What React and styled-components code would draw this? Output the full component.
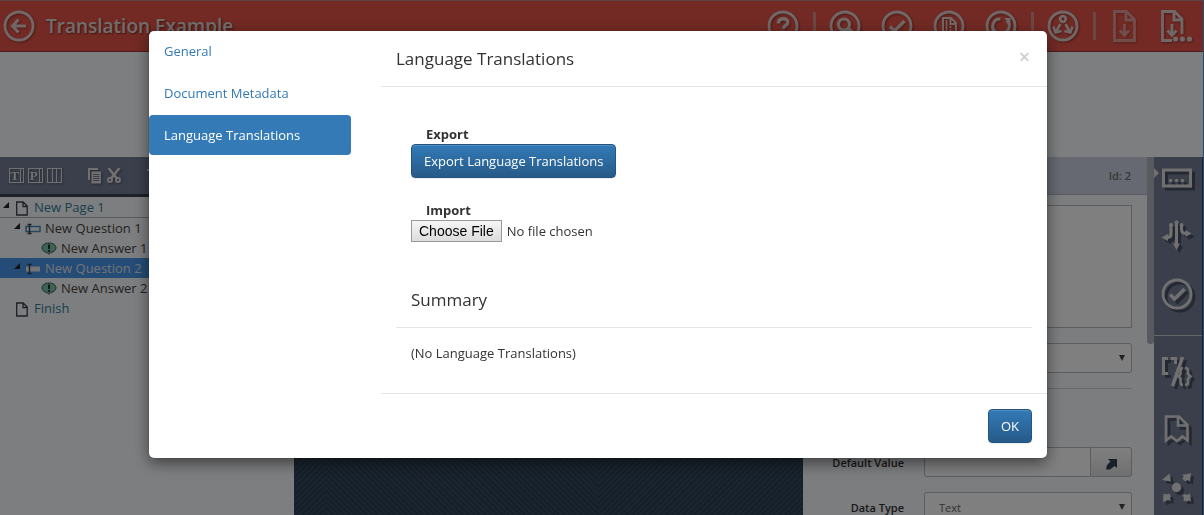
import React, { useState } from 'react';
import styled, { createGlobalStyle, css } from 'styled-components';

const fontFamily = '"Open Sans", "Noto Sans", sans-serif';

const colors = {
  red: '#e65448',
  slate: '#747f97',
  slateDark: '#3c4254',
  panel: '#f8fafe',
  paper: '#fbfdff',
  icon: '#e0e0e0',
  blue: '#337ab7',
  teal: '#327f9c',
  text: '#333333',
  line: '#e5e5e5'
};

const GlobalStyle = createGlobalStyle`
  *, *::before, *::after { box-sizing: border-box; }
  body {
    margin: 0;
    overflow: hidden;
    font-family: ${fontFamily};
    font-size: 13px;
    line-height: 20px;
    color: ${colors.text};
  }
  button, input, select, textarea { font-family: inherit; font-size: inherit; }
  h1, h2, h3, p, ul { margin: 0; padding: 0; }
  svg { display: block; }
`;

const Page = styled.div`
  display: flex;
  flex-direction: column;
  height: 100vh;
  background: ${colors.paper};
  border-right: 1px solid #3f9ff0;
`;

const IconButton = styled.button`
  display: flex;
  align-items: center;
  justify-content: center;
  flex: none;
  padding: 0;
  border: none;
  background: none;
  color: ${colors.icon};
  opacity: ${props => (props.$faded ? 0.6 : 1)};
  svg { filter: drop-shadow(1px 1px 1px rgba(0, 0, 0, 0.35)); }
`;

const Header = styled.header`
  display: flex;
  align-items: center;
  flex: none;
  height: 52px;
  padding: 0 10px 0 3px;
  background: ${colors.red};
  border-top: 1px solid #b0898a;
  border-bottom: 1px solid #a03a34;
  h1 {
    flex: 1;
    margin-left: 11px;
    font-size: 19px;
    font-weight: 600;
    color: #e4dad8;
    text-shadow: 1px 1px 2px rgba(0, 0, 0, 0.5);
  }
  ${IconButton} { color: #e2cfcc; }
`;

const IconGroup = styled.div`
  display: flex;
  gap: 20px;
  & + & {
    margin-left: 14px;
    padding-left: 16px;
    background: linear-gradient(#d9908a, #d9908a) left center / 3px 28px no-repeat;
  }
`;

const TopSpace = styled.div`
  flex: none;
  height: 105px;
`;

const Workspace = styled.div`
  display: flex;
  flex: 1;
  min-height: 0;
`;

const TreePanel = styled.aside`
  flex: none;
  width: 294px;
`;

const TreeToolbar = styled.div`
  display: flex;
  align-items: center;
  height: 40px;
  padding-left: 9px;
  gap: 4px;
  background: ${colors.slate};
  border-bottom: 3px solid ${colors.slateDark};
  button:nth-child(4) { margin-left: 22px; }
  button:nth-child(6) { margin-left: 22px; }
`;

const TreeRow = styled.li`
  display: flex;
  align-items: center;
  height: 20px;
  padding-left: ${props => props.$indent}px;
  list-style: none;
  white-space: nowrap;
  color: ${props => (props.$page ? colors.teal : '#444')};
  ${props => props.$ruled && css`
    height: 21px;
    border-bottom: 1px solid #b4b6ba;
  `}
  ${props => props.$selected && css`
    color: #e4e8ee;
    background: #4898ec;
  `}
`;

const Slot = styled.span`
  display: flex;
  justify-content: ${props => (props.$width > 11 ? 'center' : 'flex-start')};
  width: ${props => props.$width}px;
  margin-right: ${props => (props.$width > 11 ? 4 : 0)}px;
`;

const stripes = angle =>
  `repeating-linear-gradient(${angle}deg, transparent 0 2px, rgba(255, 255, 255, 0.05) 2px 4px)`;

const Canvas = styled.main`
  flex: 1;
  display: grid;
  grid-template-columns: 32px 272px 1fr;
  background: #2c4054;
  span { background: ${stripes(-45)}; }
  span:nth-child(2) { background: ${stripes(45)}; }
`;

const Properties = styled.section`
  flex: none;
  width: 344px;
  background: ${colors.panel};
`;

const PropertiesHead = styled.div`
  height: 38px;
  padding: 9px 16px 0 0;
  text-align: right;
  font-size: 11px;
  font-weight: 600;
  color: #6c6e72;
  background: #ccd2e2;
  border-bottom: 1px solid #b4b9c6;
`;

const Fields = styled.form`
  display: flex;
  flex-direction: column;
  gap: 15px;
  padding: 10px 15px 0 0;
  hr {
    width: 100%;
    height: 1px;
    margin: 0 0 43px;
    border: none;
    background: #cdcfd3;
  }
`;

const Field = styled.div`
  display: grid;
  grid-template-columns: 101px 1fr;
  gap: 20px;
  label {
    padding-top: 6px;
    text-align: right;
    font-size: 11px;
    font-weight: 600;
    color: #333;
  }
  textarea, select, input {
    width: 100%;
    min-width: 0;
    height: 30px;
    padding: 0 14px;
    border: 1px solid #b8babf;
    border-radius: 3px;
    background: #fff;
    color: #666;
    font-size: 11px;
  }
  textarea {
    height: 123px;
    border-radius: 0;
    resize: none;
  }
`;

const SelectBox = styled.div`
  display: grid;
  select {
    grid-area: 1 / 1;
    appearance: none;
  }
  &::after {
    content: '';
    grid-area: 1 / 1;
    place-self: center end;
    margin-right: 7px;
    border: 3px solid transparent;
    border-top: 6px solid #444;
    border-bottom: none;
    pointer-events: none;
  }
`;

const InputGroup = styled.div`
  display: flex;
  input { border-radius: 3px 0 0 3px; }
  button {
    flex: none;
    display: flex;
    align-items: center;
    justify-content: center;
    width: 41px;
    padding: 4px 0 0;
    border: 1px solid #b8babf;
    border-left: none;
    border-radius: 0 3px 3px 0;
    background: linear-gradient(#fff, #e0e0e0);
    color: #2c4256;
  }
`;

const ScrollTrack = styled.div`
  flex: none;
  width: 7px;
  background: ${colors.panel};
  &::before {
    content: '';
    display: block;
    height: 187px;
    border-radius: 0 0 3px 3px;
    background: #b2b5be;
  }
`;

const Rail = styled.nav`
  flex: none;
  width: 49px;
  background: ${colors.slate};
  border-right: 1px solid #3c4254;
`;

const RailGroup = styled.div`
  display: flex;
  flex-direction: column;
  align-items: center;
  gap: 26px;
  padding: 5px 3px 25px 0;
  & + & {
    padding-top: 19px;
    border-top: 1px solid #c8ccd4;
  }
  svg { filter: drop-shadow(3px 3px 0 rgba(30, 36, 54, 0.5)); }
`;

const RailButton = styled(IconButton)`
  position: relative;
  width: 32px;
  ${props => props.$active && css`
    &::before {
      content: '';
      position: absolute;
      left: -7px;
      top: 6px;
      border: 5px solid transparent;
      border-left-color: ${colors.icon};
      border-right: none;
    }
  `}
`;

const Backdrop = styled.div`
  position: fixed;
  inset: 0;
  display: flex;
  justify-content: center;
  align-items: flex-start;
  padding: 31px 8px 0 0;
  background: rgba(0, 0, 0, 0.5);
`;

const Dialog = styled.div`
  display: grid;
  grid-template-columns: 202px 1fr;
  column-gap: 30px;
  width: 100%;
  max-width: 898px;
  background: #fff;
  border-radius: 5px;
  box-shadow: 0 5px 15px rgba(0, 0, 0, 0.5), 0 0 1px rgba(0, 0, 0, 0.6);
`;

const SideNav = styled.nav`
  display: flex;
  flex-direction: column;
  gap: 2px;
`;

const SideLink = styled.a`
  padding: 10px 15px;
  border-radius: 4px;
  text-decoration: none;
  color: ${props => (props.$active ? '#fff' : colors.blue)};
  background: ${props => (props.$active ? colors.blue : 'transparent')};
`;

const DialogHead = styled.div`
  display: flex;
  align-items: center;
  justify-content: space-between;
  height: 56px;
  padding: 0 15px;
  border-bottom: 1px solid ${colors.line};
  h2 {
    font-size: 17px;
    font-weight: 500;
  }
  button {
    width: 15px;
    padding: 0 0 4px;
    border: none;
    background: none;
    font-size: 20px;
    font-weight: 600;
    line-height: 20px;
    color: #ccc;
  }
`;

const DialogBody = styled.div`
  padding: 37px 15px 30px;
  h3 {
    margin-top: 46px;
    padding: 0 15px 15px;
    border-bottom: 1px solid ${colors.line};
    font-size: 17px;
    font-weight: 400;
    line-height: 24px;
  }
  p { padding: 15px 15px 0; }
`;

const FormGroup = styled.div`
  display: flex;
  flex-direction: column;
  align-items: flex-start;
  padding-left: 15px;
  & + & { margin-top: 22px; }
  label {
    padding-left: 15px;
    font-weight: 700;
  }
`;

const PrimaryButton = styled.button`
  height: 34px;
  padding: 0 12px;
  border: 1px solid #245580;
  border-radius: 4px;
  background: linear-gradient(#337ab7, #265a88);
  box-shadow: inset 0 1px 0 rgba(255, 255, 255, 0.15), 0 1px 1px rgba(0, 0, 0, 0.08);
  color: #fff;
`;

const FileInput = styled.input`
  height: 22px;
  color: ${colors.text};
  &::file-selector-button {
    height: 22px;
    margin-right: 5px;
    padding: 0 7px;
    border: 1px solid #999;
    border-radius: 0;
    background: linear-gradient(#f6f6f6, #dcdcdc);
    font-family: "Liberation Sans", sans-serif;
    font-size: 14px;
    color: #000;
  }
`;

const DialogFoot = styled.div`
  display: flex;
  justify-content: flex-end;
  padding: 15px;
  border-top: 1px solid ${colors.line};
`;

const Circled = ({ children }) => (
  <svg width="32" height="32" viewBox="0 0 32 32" fill="none" stroke="currentColor" strokeWidth="3">
    <circle cx="16" cy="16" r="14" strokeWidth="2.8" />
    {children}
  </svg>
);

const BackIcon = () => (
  <Circled><path d="M23 16H10.500M15.500 9.500L9.500 16l6 6.500" /></Circled>
);

const HelpIcon = () => (
  <Circled>
    <path d="M11.500 13.500c0-3.500 2-4.700 4.700-4.700 2.600 0 4.600 1.300 4.600 3.600 0 3-4.300 3-4.300 6.400" strokeWidth="3.500" />
    <path d="M16.500 20.500v3.500" strokeWidth="3.500" />
  </Circled>
);

const SearchIcon = () => (
  <Circled><circle cx="15" cy="14.500" r="5.500" strokeWidth="3.200" /><path d="M19 18.500l5 5" strokeWidth="4" /></Circled>
);

const CheckIcon = () => (
  <Circled><path d="M9 16.500l4.500 4.500L23.500 11" strokeWidth="3.500" /></Circled>
);

const DocIcon = () => (
  <Circled>
    <path d="M10 24V8h8l5 5v11M17.500 8v6h5.500" strokeWidth="2" />
    <path d="M13.500 10v14" strokeWidth="1.500" />
    <path d="M17.500 16v9" strokeWidth="1.800" strokeDasharray="2 1.500" />
  </Circled>
);

const RefreshIcon = () => (
  <Circled>
    <path d="M10.500 21.500a7 7 0 0 1 5-12.500M21.500 10.500a7 7 0 0 1-5 12.500" strokeWidth="3" />
    <path d="M19 8h6.500v6.500zM13 24H6.500v-6.500z" fill="currentColor" stroke="none" />
  </Circled>
);

const BranchIcon = () => (
  <Circled>
    <circle cx="16" cy="9" r="2.800" strokeWidth="2.800" />
    <path d="M13.500 14L9.500 21M18.500 14l4 7" strokeWidth="2.600" />
    <path d="M6.500 16.500l2 6 6-1.500M25.500 16.500l-2 6-6-1.500" strokeWidth="2.400" />
  </Circled>
);

const DownloadIcon = ({ dots }) => (
  <svg width="32" height="32" viewBox="0 0 32 32" fill="none" stroke="currentColor" strokeWidth="2.800">
    {dots
      ? <path d="M11 30.500H1.500v-29h12l7.500 7.500V24M13 1.500V10h8" />
      : <path d="M5.500 1.500h12l8 8v21h-20zM17 1.500V10h8.500" />}
    <path d={dots ? 'M11 14v11M6.500 20.500L11 25.500l4.500-5' : 'M15.500 14v11M11 20.500l4.500 5 4.500-5'} />
    {dots && [14.5, 21.5, 28.5].map(x => (
      <circle key={x} cx={x} cy="29" r="2.600" fill="currentColor" stroke="none" />
    ))}
  </svg>
);

const LayoutIcon = ({ letter }) => (
  <svg width="15" height="15" viewBox="0 0 15 15" fill="none" stroke="currentColor" strokeWidth="1">
    <rect x="0.500" y="0.500" width="14" height="14" />
    <path d={letter ? 'M11.500 0v15' : 'M5.500 0v15M9.500 0v15'} />
    {letter && (
      <text x="5.800" y="12" textAnchor="middle" fontFamily="Liberation Serif, serif" fontWeight="700" fontSize="13" fill="currentColor" stroke="none">
        {letter}
      </text>
    )}
  </svg>
);

const CopyIcon = () => (
  <svg width="15" height="16" viewBox="0 0 15 16" fill="none" stroke="currentColor">
    <path d="M1 12V1h9" strokeWidth="2" />
    <rect x="3.500" y="3.500" width="9.500" height="12" fill="currentColor" stroke="none" />
    <path d="M5 6.500h6.500M5 8.500h6.500M5 10.500h6.500M5 12.500h6.500" stroke={colors.slate} />
  </svg>
);

const CutIcon = () => (
  <svg width="14" height="15" viewBox="0 0 14 15" fill="none" stroke="currentColor" strokeWidth="2">
    <path d="M1.500 0l8 10M12.500 0l-8 10" strokeWidth="2.600" />
    <circle cx="3" cy="12" r="2" />
    <circle cx="11" cy="12" r="2" />
  </svg>
);

const TrashIcon = () => (
  <svg width="14" height="15" viewBox="0 0 14 15" fill="currentColor">
    <path d="M0 1h14v2H0zM2 4h10l-1 11H3z" />
  </svg>
);

const ArrowIcon = () => (
  <svg width="6" height="12" viewBox="0 0 6 12"><path d="M6 1v6H0z" fill="#222" /></svg>
);

const PageIcon = () => (
  <svg width="12" height="17" viewBox="0 0 12 17" fill="none" stroke="#3a4050">
    <path d="M.7 3h6.500l4 4v9H.7zM7 3v4.500h4" strokeWidth="1.300" />
  </svg>
);

const QuestionIcon = ({ filled }) => (
  <svg width="16" height="14" viewBox="0 0 16 14" fill="none">
    <rect x="1" y="5.500" width="14" height="5" fill={filled ? '#e8e8e8' : 'none'} stroke={filled ? 'none' : '#4a90b8'} strokeWidth="1.500" />
    <path d="M2.500 3.500h4M2.500 12.500h4M4.500 3.500v9" stroke="#3a4050" strokeWidth="1.400" />
  </svg>
);

const AnswerIcon = () => (
  <svg width="16" height="13" viewBox="0 0 16 13">
    <path d="M8 1c4 0 7 2 7 4.800 0 2.500-2.500 4.200-5 4.700L8 12.300l-2-1.800C3 10 1 8.300 1 5.800 1 3 4 1 8 1z" fill="#7ac4ac" stroke="#3a5a58" />
    <path d="M8 2.500v4.500M8 8v2" stroke="#222" strokeWidth="1.800" />
  </svg>
);

const ExpandIcon = () => (
  <svg width="11" height="11" viewBox="0 0 11 11" fill="currentColor">
    <path d="M2 0h9v9L8.500 7 4 10.500H0L1 6l3.500-3.500z" />
  </svg>
);

const PanelIcon = () => (
  <svg width="32" height="32" viewBox="0 0 32 32" fill="currentColor">
    <rect x="2.500" y="8" width="27" height="16" fill="none" stroke="currentColor" strokeWidth="3" />
    <circle cx="9.500" cy="18.500" r="1.700" /><circle cx="15.500" cy="18.500" r="1.700" /><circle cx="21.500" cy="18.500" r="1.700" />
  </svg>
);

const FlowIcon = () => (
  <svg width="32" height="32" viewBox="0 0 32 32" fill="none" stroke="currentColor" strokeWidth="3">
    <path d="M15.500 2v22M10 5v8q0 4.500-4 4.500M20.500 5v4q0 4.500 4.500 4.500" strokeLinecap="round" />
    <path d="M12 23.500h7L15.500 30zM7 14v7l-6.500-3.500zM24.500 10v7l6-3.500z" fill="currentColor" stroke="none" />
    <g fill="currentColor" stroke="none">
      <circle cx="15.500" cy="2.500" r="2" /><circle cx="10" cy="5" r="2" /><circle cx="20.500" cy="5" r="2" />
    </g>
  </svg>
);

const CodeIcon = () => (
  <svg width="32" height="32" viewBox="0 0 32 32" fill="none" stroke="currentColor" strokeWidth="3">
    <path d="M7 3.500H2.500v15H7M9.500 3.500h5V9" />
    <path d="M21.500 2L11.500 31" strokeWidth="3.500" />
    <path d="M22 13q-2.500 0-2.500 3v3l-2 2.500 2 2V27q0 3 2.500 3M24 13q3 0 3 3v3l2.500 2.500-2.500 2V27q0 3-3 3" strokeWidth="2.600" />
  </svg>
);

const ReceiptIcon = () => (
  <svg width="32" height="32" viewBox="0 0 32 32" fill="none" stroke="currentColor" strokeWidth="2.600">
    <path d="M5 27.500V3.500h13l8.500 8.500v15.500l-5-4-5.500 4.500-6-4.500zM17 3.500v9h9.500" />
  </svg>
);

const HubIcon = () => (
  <svg width="32" height="32" viewBox="0 0 32 32" fill="currentColor">
    <circle cx="15.500" cy="16.500" r="4.700" />
    <path d="M8.500 2.500l1.500 8-9-1.500zM30 2l-1 8.500-2.500-1.500-2 1.500-3-2.500 1-3-1-2 3 .500zM2 31l.500-8.500 3 1L8 22.500l2 2.500-1 2 1 3-3-1zM30 31l-2-1.500-2.500 1-3-1 .500-2.500-1.500-3 2.500-1 2 1 3-1.500z" />
  </svg>
);

const tree = [
  { label: 'New Page 1', indent: 3, open: true, icon: <PageIcon />, page: true, ruled: true },
  { label: 'New Question 1', indent: 14, open: true, icon: <QuestionIcon /> },
  { label: 'New Answer 1', indent: 30, icon: <AnswerIcon /> },
  { label: 'New Question 2', indent: 14, open: true, icon: <QuestionIcon filled />, selected: true },
  { label: 'New Answer 2', indent: 30, icon: <AnswerIcon /> },
  { label: 'Finish', indent: 3, icon: <PageIcon />, page: true }
];

const treeTools = [
  ['Text layout', <LayoutIcon letter="T" />],
  ['Page layout', <LayoutIcon letter="P" />],
  ['Columns', <LayoutIcon />],
  ['Copy', <CopyIcon />],
  ['Cut', <CutIcon />],
  ['Delete', <TrashIcon />]
];

const headerGroups = [
  [['Help', <HelpIcon />]],
  [['Search', <SearchIcon />], ['Validate', <CheckIcon />], ['Document', <DocIcon />], ['Refresh', <RefreshIcon />]],
  [['Branch', <BranchIcon />]],
  [['Save', <DownloadIcon />, true], ['Save as', <DownloadIcon dots />]]
];

const railGroups = [
  [['Properties', <PanelIcon />], ['Flow', <FlowIcon />], ['Validation', <CheckIcon />]],
  [['Code', <CodeIcon />], ['Document', <ReceiptIcon />], ['Connections', <HubIcon />]]
];

const sections = ['General', 'Document Metadata', 'Language Translations'];

const TranslationsDialog = ({ onClose }) => {
  const [section, setSection] = useState('Language Translations');

  return (
    <Backdrop>
      <Dialog role="dialog" aria-modal="true" aria-labelledby="dialog-title">
        <SideNav>
          {sections.map(name => (
            <SideLink key={name} href="#" $active={name === section} onClick={() => setSection(name)}>
              {name}
            </SideLink>
          ))}
        </SideNav>
        <div>
          <DialogHead>
            <h2 id="dialog-title">{section}</h2>
            <button aria-label="Close" onClick={onClose}>×</button>
          </DialogHead>
          <DialogBody>
            <FormGroup>
              <label htmlFor="export">Export</label>
              <PrimaryButton id="export">Export Language Translations</PrimaryButton>
            </FormGroup>
            <FormGroup>
              <label htmlFor="import">Import</label>
              <FileInput id="import" type="file" />
            </FormGroup>
            <h3>Summary</h3>
            <p>(No Language Translations)</p>
          </DialogBody>
          <DialogFoot>
            <PrimaryButton onClick={onClose}>OK</PrimaryButton>
          </DialogFoot>
        </div>
      </Dialog>
    </Backdrop>
  );
};

const App = () => {
  const [open, setOpen] = useState(true);

  return (
    <>
      <GlobalStyle />
      <Page>
        <Header>
          <IconButton aria-label="Back"><BackIcon /></IconButton>
          <h1>Translation Example</h1>
          {headerGroups.map((group, i) => (
            <IconGroup key={i}>
              {group.map(([name, icon, faded]) => (
                <IconButton key={name} aria-label={name} $faded={faded}>{icon}</IconButton>
              ))}
            </IconGroup>
          ))}
        </Header>
        <TopSpace />
        <Workspace>
          <TreePanel>
            <TreeToolbar>
              {treeTools.map(([name, icon]) => (
                <IconButton key={name} aria-label={name}>{icon}</IconButton>
              ))}
            </TreeToolbar>
            <ul>
              {tree.map(row => (
                <TreeRow key={row.label} $indent={row.indent} $page={row.page} $ruled={row.ruled} $selected={row.selected}>
                  <Slot $width={11}>{row.open && <ArrowIcon />}</Slot>
                  <Slot $width={16}>{row.icon}</Slot>
                  {row.label}
                </TreeRow>
              ))}
            </ul>
          </TreePanel>
          <Canvas><span /><span /><span /></Canvas>
          <Properties>
            <PropertiesHead>Id: 2</PropertiesHead>
            <Fields>
              <Field>
                <label htmlFor="question">Question</label>
                <textarea id="question" />
              </Field>
              <Field>
                <label htmlFor="kind">Type</label>
                <SelectBox><select id="kind" /></SelectBox>
              </Field>
              <hr />
              <Field>
                <label htmlFor="default-value">Default Value</label>
                <InputGroup>
                  <input id="default-value" type="text" />
                  <button type="button" aria-label="Expand"><ExpandIcon /></button>
                </InputGroup>
              </Field>
              <Field>
                <label htmlFor="data-type">Data Type</label>
                <SelectBox><select id="data-type"><option>Text</option></select></SelectBox>
              </Field>
            </Fields>
          </Properties>
          <ScrollTrack />
          <Rail>
            {railGroups.map((group, i) => (
              <RailGroup key={i}>
                {group.map(([name, icon]) => (
                  <RailButton key={name} aria-label={name} $active={name === 'Properties'}>{icon}</RailButton>
                ))}
              </RailGroup>
            ))}
          </Rail>
        </Workspace>
      </Page>
      {open && <TranslationsDialog onClose={() => setOpen(false)} />}
    </>
  );
};

export default App;
